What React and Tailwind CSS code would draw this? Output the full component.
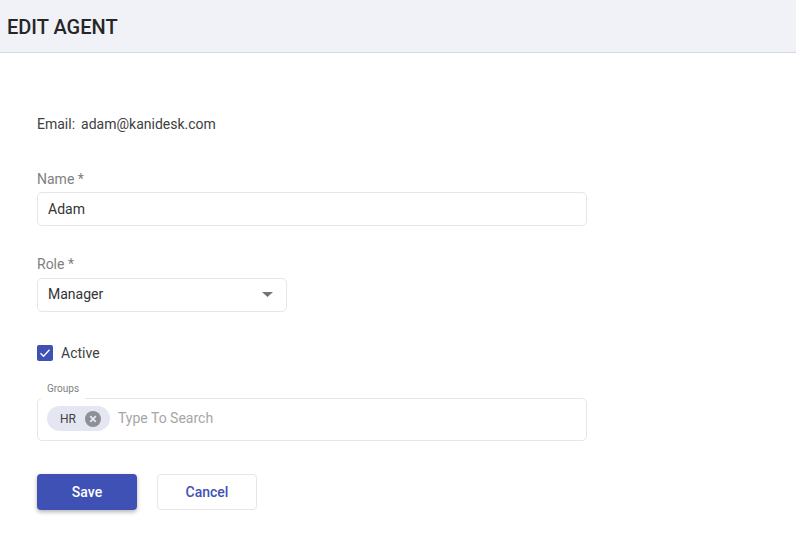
import React from 'react';

export default function App() {
  return (
    <div className="w-full h-[539px] bg-white overflow-hidden font-['Roboto',sans-serif]">
      {/* header */}
      <div className="h-[53px] bg-[#f0f2f8] border-b border-[#d0d8ec] flex items-center px-[7px] pt-[2px]">
        <h1 className="text-[20px] font-medium text-[#262626] leading-none">EDIT AGENT</h1>
      </div>

      <div className="pl-[37px] w-[587px]">
        <div className="pt-[62px] flex gap-[6px] text-[14px] leading-[18px] text-[#404040]">
          <span>Email:</span>
          <span>adam@kanidesk.com</span>
        </div>

        <div className="mt-[37px]">
          <label className="block text-[14px] leading-[18px] text-[#808080]">Name *</label>
          <div className="mt-[4px] h-[34px] border border-[#e6e6e6] rounded-[5px] flex items-center px-[10px] text-[14px] text-[#333]">Adam</div>
        </div>

        <div className="mt-[29px]">
          <label className="block text-[14px] leading-[18px] text-[#808080]">Role *</label>
          <div className="mt-[5px] w-[250px] h-[34px] border border-[#e6e6e6] rounded-[5px] flex items-center justify-between pl-[10px] pr-[13px] pb-[1px] text-[14px] text-[#333]">
            <span>Manager</span>
            <svg width="11" height="5" viewBox="0 0 11 5"><path d="M0 0h11L5.500 5z" fill="#757575" /></svg>
          </div>
        </div>

        <div className="mt-[32px] flex items-center gap-[8px] h-[18px]">
          <span className="w-[16px] h-[16px] rounded-[2px] bg-[#3f51b5] flex items-center justify-center">
            <svg width="14" height="14" viewBox="0 0 14 14" fill="none"><path d="M2.500 7.300 5.500 10.200 11.500 3.800" stroke="#fff" strokeWidth="1.300" /></svg>
          </span>
          <span className="text-[14px] text-[#404040]">Active</span>
        </div>

        <div className="relative mt-[36px] h-[43px] border border-[#e6e6e6] rounded-[5px] flex items-center pl-[9px] pb-[2px] gap-[8px]">
          <span className="absolute left-[3px] top-[-22px] bg-white px-[6px] h-[22px] flex items-center text-[10px] text-[#808080]">Groups</span>
          <span className="h-[25px] w-[63px] rounded-full bg-[#e4e7f2] flex items-center justify-between pl-[13px] pr-[9px] text-[12px] text-[#404040]">
            HR
            <svg width="16" height="16" viewBox="0 0 16 16">
              <circle cx="8" cy="8" r="8" fill="#8e8e96" />
              <path d="M5.200 5.200l5.600 5.600M10.800 5.200l-5.600 5.600" stroke="#e4e7f2" strokeWidth="1.800" />
            </svg>
          </span>
          <span className="text-[14px] text-[#a6a6a6]">Type To Search</span>
        </div>

        <div className="mt-[33px] flex items-center gap-[20px]">
          <button className="w-[100px] h-[36px] rounded-[4px] bg-[#3f51b5] text-white text-[14px] font-medium shadow-[0_2px_4px_rgba(0,0,0,0.3)]">Save</button>
          <button className="w-[100px] h-[36px] rounded-[4px] bg-white border border-[#e6e6e6] text-[#3f51b5] text-[14px] font-medium">Cancel</button>
        </div>
      </div>
    </div>
  );
}
